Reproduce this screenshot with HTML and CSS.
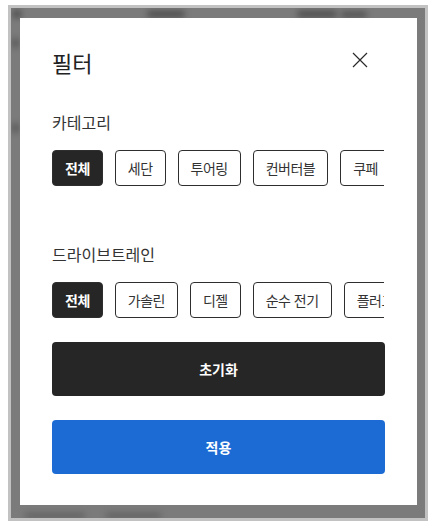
FILE: index.html
```html
<!DOCTYPE html>
<html lang="ko">
<head>
<meta charset="utf-8">
<title>필터</title>
<link rel="stylesheet" href="styles.css">
</head>
<body>
<div class="frame">
  <div class="blob b1"></div>
  <div class="blob b2"></div>
  <div class="blob b3"></div>
  <div class="blob b4"></div>
  <div class="blob b5"></div>
  <div class="blob b6"></div>
  <div class="blob b7"></div>
  <div class="blob b8"></div>
  <div class="modal">
    <div class="header">
      <h2 class="title">필터</h2>
      <button class="close" aria-label="닫기">
        <svg width="16" height="16" viewBox="0 0 16 16"><path d="M1 1L15 15M15 1L1 15" stroke="#2a2a2a" stroke-width="1.2" fill="none"/></svg>
      </button>
    </div>
    <section class="group">
      <div class="label">카테고리</div>
      <div class="chips">
        <span class="chip active">전체</span>
        <span class="chip">세단</span>
        <span class="chip">투어링</span>
        <span class="chip">컨버터블</span>
        <span class="chip">쿠페</span>
        <span class="chip">SUV</span>
      </div>
    </section>
    <section class="group second">
      <div class="label">드라이브트레인</div>
      <div class="chips">
        <span class="chip active">전체</span>
        <span class="chip">가솔린</span>
        <span class="chip">디젤</span>
        <span class="chip">순수 전기</span>
        <span class="chip">플러그인 하이브리드</span>
      </div>
    </section>
    <button class="btn reset">초기화</button>
    <button class="btn apply">적용</button>
  </div>
</div>
</body>
</html>
```

FILE: styles.css
```css
html, body {
  margin: 0;
  padding: 0;
  background: #ffffff;
}
body {
  font-family: "Noto Sans CJK KR", "Noto Sans", sans-serif;
  color: #222;
}
.frame {
  position: relative;
  overflow: hidden;
  margin: 5px 8px 0 8px;
  width: 414px;
  height: 510px;
  box-sizing: content-box;
  border: 3px solid #c2c2c2;
  background: #7b7b7b;
  padding: 0;
}
.blob {
  position: absolute;
  background: #4a4a4a;
  filter: blur(3px);
  border-radius: 3px;
}
.b1 { left: 136px; top: 3px; width: 38px; height: 6px; }
.b2 { left: 286px; top: 3px; width: 40px; height: 6px; }
.b3 { left: 330px; top: 4px; width: 26px; height: 5px; }
.b4 { left: 2px; top: 2px; width: 8px; height: 8px; }
.b5 { left: 1px; top: 30px; width: 7px; height: 10px; background: #5a5a5a; }
.b6 { left: 1px; top: 115px; width: 7px; height: 10px; background: #5a5a5a; }
.b7 { left: 14px; top: 505px; width: 60px; height: 5px; background: #5e5e5e; }
.b8 { left: 95px; top: 505px; width: 55px; height: 5px; background: #5e5e5e; }
.modal {
  position: relative;
  margin: 10px 0 0 9px;
  width: 397px;
  height: 487px;
  box-sizing: border-box;
  background: #ffffff;
  padding: 28px 33px 0 32px;
  display: flex;
  flex-direction: column;
}
.header {
  display: flex;
  justify-content: space-between;
  align-items: flex-start;
}
.title {
  margin: 0;
  font-size: 22px;
  line-height: 32px;
  font-weight: 400;
  color: #222;
}
.close {
  margin: 6px 16px 0 0;
  padding: 0;
  border: 0;
  background: none;
  width: 16px;
  height: 16px;
  display: block;
}
.close svg { display: block; }
.group {
  margin-top: 32px;
}
.group.second {
  margin-top: 56px;
}
.label {
  font-size: 16px;
  line-height: 24px;
  color: #333;
}
.chips {
  margin-top: 16px;
  display: flex;
  gap: 12px;
  overflow: hidden;
  white-space: nowrap;
}
.chip {
  flex: none;
  height: 36px;
  box-sizing: border-box;
  border: 1px solid #2e2e2e;
  border-radius: 4px;
  padding: 0 12px;
  font-size: 14px;
  letter-spacing: -0.5px;
  line-height: 34px;
  color: #333;
  background: #fff;
}
.chip.active {
  background: #262626;
  color: #fff;
  font-weight: 700;
}
.btn {
  display: block;
  width: 333px;
  height: 54px;
  border: 0;
  border-radius: 4px;
  font-family: "Noto Sans CJK KR", "Noto Sans", sans-serif;
  font-size: 14px;
  font-weight: 700;
  color: #fff;
  padding: 0;
}
.reset {
  margin-top: 24px;
  background: #262626;
}
.apply {
  margin-top: 24px;
  background: #1c6bd4;
}
```
